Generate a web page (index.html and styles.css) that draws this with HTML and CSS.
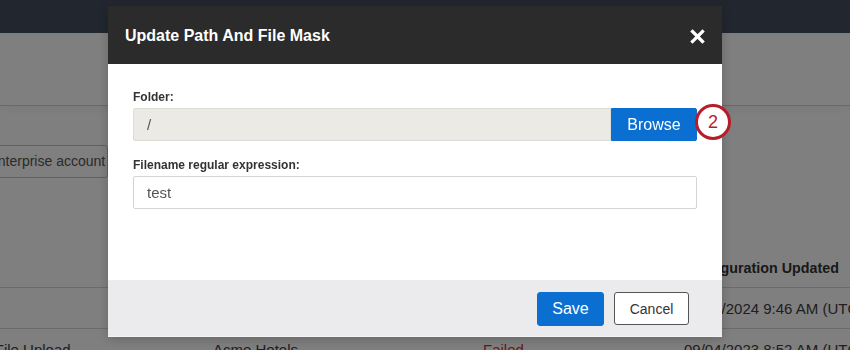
FILE: index.html
```html
<!DOCTYPE html>
<html lang="en">
<head>
    <meta charset="UTF-8">
    <meta name="viewport" content="width=device-width, initial-scale=1.0">
    <title>Update Path And File Mask</title>
    <link rel="stylesheet" href="styles.css">
</head>
<body>
    <div class="app">
        <div class="top-nav"></div>
        <div class="sub-header"></div>

        <div class="content">
            <div class="filter-box">enterprise account</div>

            <div class="jobs-table">
                <div class="jobs-row jobs-head">
                    <span></span>
                    <span>Source</span>
                    <span>Status</span>
                    <span>Configuration Updated</span>
                </div>
                <div class="jobs-row">
                    <span>Survey</span>
                    <span>Acme Hotels</span>
                    <span></span>
                    <span>09/04/2024 9:46 AM (UTC)</span>
                </div>
                <div class="jobs-row">
                    <span>Automated File Upload</span>
                    <span>Acme Hotels</span>
                    <span class="status-failed">Failed</span>
                    <span>09/04/2023 8:52 AM (UTC)</span>
                </div>
            </div>
        </div>
    </div>

    <div class="overlay"></div>

    <div class="modal">
        <div class="modal-header">
            <h2 class="modal-title">Update Path And File Mask</h2>
            <button class="modal-close" aria-label="Close">
                <svg width="15" height="15" viewBox="0 0 15 15">
                    <path d="M2.5 2.5 L12.5 12.5 M12.5 2.5 L2.5 12.5" stroke="#fff" stroke-width="3.2" stroke-linecap="square"/>
                </svg>
            </button>
        </div>

        <div class="modal-body">
            <div class="field">
                <label class="field-label">Folder:</label>
                <div class="input-group">
                    <input class="text-input input-readonly" type="text" value="/" readonly>
                    <button class="btn btn-primary btn-browse">Browse</button>
                </div>
            </div>
            <div class="field">
                <label class="field-label">Filename regular expression:</label>
                <input class="text-input" type="text" value="test">
            </div>
        </div>

        <div class="modal-footer">
            <button class="btn btn-primary btn-save">Save</button>
            <button class="btn btn-cancel">Cancel</button>
        </div>

        <span class="step-badge">2</span>
    </div>
</body>
</html>
```

FILE: styles.css
```css
:root {
    --nav-color: #444f5e;
    --line-color: #d6d6d6;
    --text-color: #404040;
    --modal-head: #2b2b2b;
    --footer-bg: #ebebed;
    --primary-color: #0b6fd1;
    --badge-color: #b71c2b;
}

* {
    box-sizing: border-box;
    margin: 0;
    padding: 0;
}

body {
    font-family: 'Liberation Sans', Arial, sans-serif;
    width: 850px;
    height: 350px;
    overflow: hidden;
    background: #fff;
    color: var(--text-color);
}

.top-nav {
    height: 33px;
    background-color: var(--nav-color);
}

.sub-header {
    height: 73px;
    border-bottom: 1px solid #d2d2d2;
    box-shadow: 0 3px 10px rgba(0, 0, 0, 0.05);
}

.content {
    padding-top: 39px;
}

.filter-box {
    width: 128px;
    height: 33px;
    margin-left: -20px;
    padding-left: 9px;
    border: 1px solid #c4c4c4;
    border-radius: 3px;
    font-size: 14px;
    line-height: 31px;
    color: #555;
    white-space: nowrap;
    overflow: hidden;
}

.jobs-table {
    margin-top: 70px;
    margin-left: -82px;
    width: 950px;
    font-size: 15px;
}

.jobs-row {
    display: grid;
    grid-template-columns: 295px 270px 201px 1fr;
    height: 41px;
    align-items: center;
    border-bottom: 1px solid var(--line-color);
    white-space: nowrap;
}

.jobs-head {
    height: 40px;
    font-size: 14.3px;
    font-weight: bold;
    color: #333;
}

.status-failed {
    color: #d0302f;
}

.overlay {
    position: fixed;
    inset: 0;
    background: rgba(0, 0, 0, 0.5);
}

.modal {
    position: absolute;
    left: 108px;
    top: 6px;
    width: 614px;
    background: #fff;
    box-shadow: 0 2px 10px rgba(0, 0, 0, 0.2);
}

.modal-header {
    height: 58px;
    display: flex;
    align-items: center;
    justify-content: space-between;
    padding: 0 17px;
    background-color: var(--modal-head);
}

.modal-title {
    font-size: 16px;
    font-weight: bold;
    color: #fff;
    padding-top: 1px;
}

.modal-close {
    display: flex;
    background: none;
    border: none;
    padding: 0;
    margin-top: 2px;
}

.modal-body {
    height: 216px;
    padding: 25px 25px 0;
}

.field {
    margin-bottom: 16px;
}

.field-label {
    display: block;
    font-size: 12px;
    font-weight: bold;
    line-height: 16px;
    margin-bottom: 3px;
    color: #333;
}

.input-group {
    display: flex;
}

.text-input {
    width: 100%;
    height: 33px;
    padding: 0 13px;
    border: 1px solid #d4d4d4;
    border-radius: 2px;
    font-family: inherit;
    font-size: 15px;
    color: #555;
    background: #fff;
    outline: none;
}

.input-readonly {
    flex: 1;
    background-color: #ebeae5;
    border-color: #dcdcd7;
    border-radius: 2px 0 0 2px;
}

.btn {
    font-family: inherit;
    border-radius: 3px;
    cursor: pointer;
}

.btn-primary {
    background-color: var(--primary-color);
    border: 1px solid var(--primary-color);
    color: #fff;
    font-size: 16px;
}

.btn-browse {
    width: 86px;
    height: 33px;
    border-radius: 0 2px 2px 0;
}

.modal-footer {
    height: 57px;
    display: flex;
    justify-content: flex-end;
    gap: 10px;
    padding: 12px 33px 0 0;
    background-color: var(--footer-bg);
    border-bottom: 1px solid #f4f4f5;
}

.btn-save {
    width: 67px;
    height: 34px;
}

.btn-cancel {
    width: 75px;
    height: 33px;
    background: #fff;
    border: 1px solid #555;
    color: #333;
    font-size: 14px;
}

.step-badge {
    position: absolute;
    left: 587px;
    top: 98px;
    width: 36px;
    height: 36px;
    border: 3px solid var(--badge-color);
    border-radius: 50%;
    background: #fff;
    color: var(--badge-color);
    font-size: 18px;
    line-height: 30px;
    text-align: center;
}
```
